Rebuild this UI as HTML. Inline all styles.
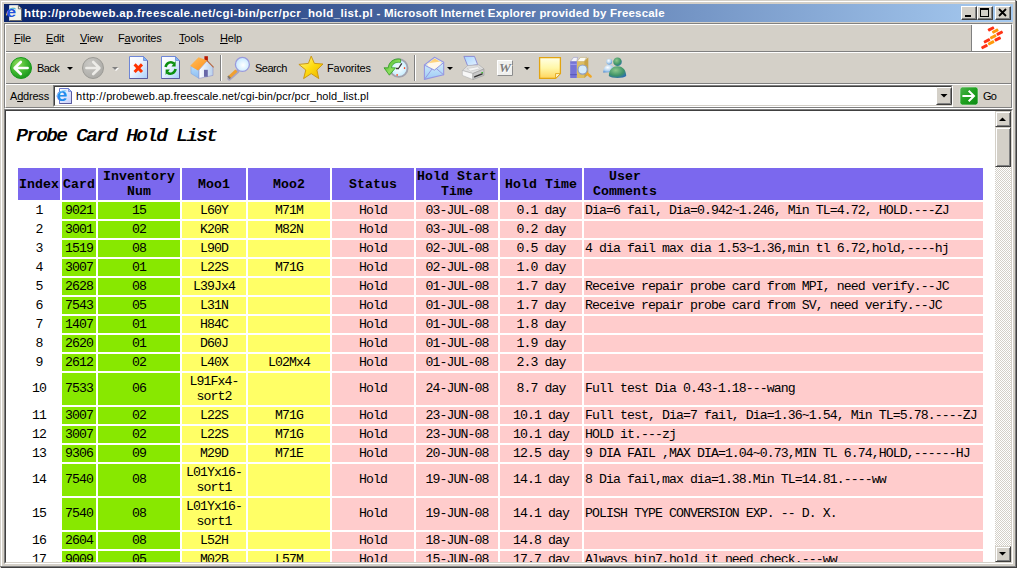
<!DOCTYPE html>
<html lang="en">
<head>
<meta charset="utf-8">
<title>Probe Card Hold List</title>
<style>
html,body{margin:0;padding:0;}
body{width:1017px;height:568px;overflow:hidden;background:#D4D0C8;position:relative;font-family:"Liberation Sans",sans-serif;font-size:11px;color:#000;}
.abs{position:absolute;}
#win{position:absolute;left:0;top:0;width:1017px;height:568px;background:#D4D0C8;overflow:hidden;}
/* outer frame */
#f1{left:0;top:0;width:1015px;height:566px;border-right:1px solid #808080;border-bottom:1px solid #808080;box-shadow:1px 1px 0 0 #404040;}
#f2{left:1px;top:1px;width:1014px;height:565px;border-left:1px solid #fff;border-top:1px solid #fff;box-sizing:border-box;}
/* title bar */
#title{left:4px;top:4px;width:1009px;height:18px;background:linear-gradient(to right,#0A246A 0%,#A6CAF0 100%);}
#title .txt{position:absolute;left:20px;top:0;height:18px;line-height:18px;color:#fff;font-weight:bold;font-size:11.5px;letter-spacing:0.29px;white-space:nowrap;}
.tbtn{position:absolute;top:2px;width:16px;height:14px;background:#D4D0C8;box-sizing:border-box;border:1px solid;border-color:#fff #404040 #404040 #fff;box-shadow:inset -1px -1px 0 #808080;}
/* rebar */
#rebar{left:4px;top:23px;width:1009px;height:86px;box-sizing:border-box;border:1px solid;border-color:#808080 #fff #fff #808080;}
#rebar2{left:5px;top:24px;width:1007px;height:84px;box-sizing:border-box;border:1px solid;border-color:#fff #808080 #808080 #fff;}
.hsep{position:absolute;left:6px;width:1005px;height:1px;}
.menu{position:absolute;top:31px;height:14px;line-height:14px;font-size:11px;white-space:nowrap;letter-spacing:-0.2px;}
.menu u{text-decoration:underline;text-decoration-thickness:1px;text-underline-offset:1px;}
.tbtxt{position:absolute;top:61px;height:14px;line-height:14px;font-size:11px;white-space:nowrap;}
.vsep{position:absolute;top:55px;width:1px;height:26px;background:#808080;box-shadow:1px 0 0 #fff;}
.dd{position:absolute;width:0;height:0;border-left:3px solid transparent;border-right:3px solid transparent;border-top:3px solid #000;}
/* address */
#addr{left:53px;top:85px;width:900px;height:22px;box-sizing:border-box;background:#fff;border:1px solid;border-color:#808080 #fff #fff #808080;}
#addr .in{position:absolute;left:0;top:0;right:0;bottom:0;border:1px solid;border-color:#404040 #D4D0C8 #D4D0C8 #404040;}
/* content */
#cframe{left:4px;top:109px;width:1009px;height:455px;box-sizing:border-box;border:1px solid;border-color:#808080 #fff #fff #808080;}
#cframe2{left:5px;top:110px;width:1007px;height:453px;box-sizing:border-box;border:1px solid;border-color:#404040 #D4D0C8 #D4D0C8 #404040;}
#page{left:6px;top:111px;width:989px;height:451px;background:#fff;overflow:hidden;}
#sb{left:995px;top:111px;width:16px;height:451px;background:#EAE8E4;background-image:repeating-conic-gradient(#fff 0% 25%,#D4D0C8 0% 50%);background-size:2px 2px;}
.sbtn{position:absolute;left:0;width:16px;box-sizing:border-box;background:#D4D0C8;border:1px solid;border-color:#D4D0C8 #404040 #404040 #D4D0C8;box-shadow:inset 1px 1px 0 #fff,inset -1px -1px 0 #808080;}
/* page content */
#page h2{position:absolute;left:10px;top:13px;margin:0;font-family:"Liberation Mono",monospace;font-style:italic;font-weight:normal;text-shadow:0.8px 0 0 #000;font-size:19px;line-height:24px;letter-spacing:-1.4px;white-space:nowrap;}
table{position:absolute;left:10px;top:55px;width:969px;border-collapse:separate;border-spacing:2px;table-layout:fixed;font-family:"Liberation Mono",monospace;font-size:13.2px;line-height:15px;letter-spacing:-0.92px;}
th,td{padding:1px;text-align:center;vertical-align:middle;white-space:nowrap;overflow:visible;}
th{background:#7B68EE;font-weight:bold;letter-spacing:0.08px;}
tr.tall td{padding:0 1px 2px 1px;}
tr.tall td.y{padding:1px;}
td.i{background:#fff;}
td.g{background:#88E800;}
td.y{background:#FFFF66;}
td.p,td.c{background:#FFCCCC;}
td.c{text-align:left;}
</style>
</head>
<body>
<div id="win">
<div id="f1" class="abs"></div>
<div id="f2" class="abs"></div>

<div id="title" class="abs">
  <div class="txt"><span style="letter-spacing:0.37px">http://probeweb.ap.freescale.net/cgi-bin/pcr/pcr_hold_list.pl</span><span style="letter-spacing:0.19px"> - Microsoft Internet Explorer provided by Freescale</span></div>
  <div class="tbtn" style="left:957px"></div>
  <div class="tbtn" style="left:973px"></div>
  <div class="tbtn" style="left:991px"></div>
</div>

<div id="rebar" class="abs"></div>
<div id="rebar2" class="abs"></div>
<div class="hsep" style="top:51px;background:#808080"></div>
<div class="hsep" style="top:52px;background:#fff"></div>
<div class="hsep" style="top:83px;background:#808080"></div>
<div class="hsep" style="top:84px;background:#fff"></div>

<div class="menu" style="left:14px"><u>F</u>ile</div>
<div class="menu" style="left:46px"><u>E</u>dit</div>
<div class="menu" style="left:80px"><u>V</u>iew</div>
<div class="menu" style="left:118px">F<u>a</u>vorites</div>
<div class="menu" style="left:179px"><u>T</u>ools</div>
<div class="menu" style="left:220px"><u>H</u>elp</div>

<div class="abs" style="left:971px;top:25px;width:1px;height:27px;background:#808080"></div>
<div class="abs" id="logo" style="left:972px;top:24px;width:39px;height:27px;background:#fff"></div>
<div class="abs" style="left:973px;top:51px;width:39px;height:1px;background:#808080"></div>

<div class="tbtxt" style="left:37px;letter-spacing:-0.6px">Back</div>
<div class="tbtxt" style="left:255px;letter-spacing:-0.5px">Search</div>
<div class="tbtxt" style="left:327px;letter-spacing:-0.15px">Favorites</div>
<div class="dd" style="left:67px;top:67px"></div>
<div class="dd" style="left:113px;top:68px;border-top-color:#fff"></div><div class="dd" style="left:112px;top:67px;border-top-color:#808080"></div>
<div class="dd" style="left:447px;top:67px"></div>
<div class="dd" style="left:524px;top:67px"></div>
<div class="vsep" style="left:220px"></div>
<div class="vsep" style="left:414px"></div>

<div class="menu" style="left:10px;top:89px">A<u>d</u>dress</div>
<div id="addr" class="abs"><div class="in"></div>
  <div class="abs" style="left:22px;top:3px;height:14px;line-height:14px;font-size:11px;letter-spacing:0.05px;white-space:nowrap"><span style="letter-spacing:0.38px">http://</span>probeweb.ap.freescale.net/cgi-bin/pcr/pcr_hold_list.pl</div>
</div>
<div class="tbtxt" style="left:983px;top:89px;letter-spacing:-0.8px">Go</div>

<svg id="icons" class="abs" style="left:0;top:0" width="1017" height="110" viewBox="0 0 1017 110">
<defs>
<radialGradient id="gBack" cx="0.35" cy="0.3" r="0.8"><stop offset="0" stop-color="#8EDB5A"/><stop offset="0.55" stop-color="#3DB52E"/><stop offset="1" stop-color="#13901A"/></radialGradient>
<radialGradient id="gFwd" cx="0.35" cy="0.3" r="0.8"><stop offset="0" stop-color="#C9C8C4"/><stop offset="1" stop-color="#A9A8A4"/></radialGradient>
<linearGradient id="gPage" x1="0" y1="0" x2="1" y2="1"><stop offset="0" stop-color="#FFFFFF"/><stop offset="0.4" stop-color="#F2F7FF"/><stop offset="1" stop-color="#A9CFFA"/></linearGradient>
<linearGradient id="gRoof" x1="0" y1="0" x2="1" y2="1"><stop offset="0" stop-color="#FFC060"/><stop offset="1" stop-color="#FF9018"/></linearGradient>
<linearGradient id="gWall" x1="0" y1="0" x2="1" y2="0"><stop offset="0" stop-color="#FFFFFF"/><stop offset="1" stop-color="#B8D0EC"/></linearGradient>
<linearGradient id="gSide" x1="0" y1="0" x2="0" y2="1"><stop offset="0" stop-color="#B4DCFC"/><stop offset="1" stop-color="#8CBCF0"/></linearGradient>
<radialGradient id="gLens" cx="0.55" cy="0.55" r="0.6"><stop offset="0" stop-color="#FFFFFF"/><stop offset="1" stop-color="#BFE6FF"/></radialGradient>
<linearGradient id="gStar" x1="0" y1="0" x2="1" y2="1"><stop offset="0" stop-color="#FFF7A0"/><stop offset="0.5" stop-color="#FFDC10"/><stop offset="1" stop-color="#E8B000"/></linearGradient>
<linearGradient id="gEnv" x1="0" y1="0" x2="0" y2="1"><stop offset="0" stop-color="#E6F9FF"/><stop offset="1" stop-color="#9CCAF4"/></linearGradient>
<linearGradient id="gFlap" x1="0" y1="0" x2="0" y2="1"><stop offset="0" stop-color="#FFC860"/><stop offset="1" stop-color="#FFF0C8"/></linearGradient>
<linearGradient id="gNote" x1="0" y1="0" x2="0" y2="1"><stop offset="0" stop-color="#FFFFE6"/><stop offset="0.5" stop-color="#FFF7A8"/><stop offset="1" stop-color="#FFD45C"/></linearGradient>
<linearGradient id="gPaper" x1="0" y1="0" x2="1" y2="1"><stop offset="0" stop-color="#A8D4FF"/><stop offset="1" stop-color="#E6F3FF"/></linearGradient>
<radialGradient id="gClock" cx="0.5" cy="0.5" r="0.5"><stop offset="0" stop-color="#FFFFFF"/><stop offset="1" stop-color="#C4ECFF"/></radialGradient>
<linearGradient id="gGo" x1="0" y1="0" x2="1" y2="1"><stop offset="0" stop-color="#4DB24D"/><stop offset="0.5" stop-color="#1FA01F"/><stop offset="1" stop-color="#0C8A14"/></linearGradient>
<radialGradient id="gMsn" cx="0.4" cy="0.35" r="0.75"><stop offset="0" stop-color="#8CC88C"/><stop offset="0.6" stop-color="#3F9468"/><stop offset="1" stop-color="#2868B8"/></radialGradient>
<radialGradient id="gMsn2" cx="0.4" cy="0.35" r="0.75"><stop offset="0" stop-color="#FFFFFF"/><stop offset="0.6" stop-color="#A8CCEC"/><stop offset="1" stop-color="#3078D0"/></radialGradient>
<linearGradient id="gHist" x1="0" y1="0" x2="1" y2="1"><stop offset="0" stop-color="#2FA81C"/><stop offset="0.55" stop-color="#8FE060"/><stop offset="1" stop-color="#2FA81C"/></linearGradient>
<linearGradient id="gAddrPg" x1="0" y1="0" x2="1" y2="1"><stop offset="0" stop-color="#FFFFFF"/><stop offset="1" stop-color="#C4CCFA"/></linearGradient>
</defs>

<!-- title icon: page + e -->
<g>
<path d="M9.5 5.5 H18.5 L21.5 8.5 V20.5 H9.5 Z" fill="#F3F3EA" stroke="#FFFFFF" stroke-width="0.6"/>
<path d="M21.6 8.6 V20.6 H9.6" fill="none" stroke="#5E5E5E" stroke-width="1"/>
<path d="M18.4 5.4 V8.8 H21.6 Z" fill="#fff" stroke="#4A4A4A" stroke-width="0.8"/>
<path d="M6.4 15.4 C7.4 10 11.4 7.6 15 8.4" fill="none" stroke="#E8C040" stroke-width="1.1"/>
<text x="6.6" y="17.2" font-family="Liberation Sans, sans-serif" font-weight="bold" font-size="15.2" fill="#2350DA" textLength="9.6" lengthAdjust="spacingAndGlyphs">e</text>
<path d="M9 9.6 C11 8 13.6 7.8 15.8 9" fill="none" stroke="#3CB4F4" stroke-width="1"/>
</g>

<!-- title buttons glyphs -->
<rect x="965" y="15" width="6" height="2" fill="#000"/>
<rect x="980.5" y="8.5" width="8" height="8" fill="none" stroke="#000" stroke-width="1"/><rect x="980" y="8" width="9" height="2" fill="#000"/>
<path d="M999 9 L1006 16 M1006 9 L999 16" stroke="#000" stroke-width="1.8" fill="none"/>

<!-- freescale logo -->
<g>
<g fill="#FF3314">
<rect x="-3.3" y="-1.5" width="6.6" height="3" rx="0.7" transform="translate(991 28.9) rotate(-27)"/>
<rect x="-3.3" y="-1.5" width="6.6" height="3" rx="0.7" transform="translate(999.7 33.2) rotate(-27)"/>
<rect x="-3.3" y="-1.5" width="6.6" height="3" rx="0.7" transform="translate(997.7 39) rotate(-27)"/>
<rect x="-3.3" y="-1.5" width="6.6" height="3" rx="0.7" transform="translate(986.9 40.8) rotate(-27)"/>
<rect x="-3.3" y="-1.5" width="6.6" height="3" rx="0.7" transform="translate(984.5 46.6) rotate(-27)"/>
</g>
<g fill="#FF9A0A">
<rect x="-3.3" y="-1.5" width="6.6" height="3" rx="0.7" transform="translate(995.3 31.1) rotate(-27)"/>
<rect x="-3.3" y="-1.5" width="6.6" height="3" rx="0.7" transform="translate(993.2 36.8) rotate(-27)"/>
<rect x="-3.3" y="-1.5" width="6.6" height="3" rx="0.7" transform="translate(991.1 42.8) rotate(-27)"/>
</g>
</g>

<!-- Back -->
<circle cx="21" cy="68" r="10.5" fill="url(#gBack)" stroke="#18991C" stroke-width="1"/>
<path d="M27.6 68 H15 M20.8 62 L14.6 68 L20.8 74" fill="none" stroke="#fff" stroke-width="2.6" stroke-linecap="round" stroke-linejoin="round"/>
<!-- Forward -->
<circle cx="93" cy="68" r="10.5" fill="url(#gFwd)" stroke="#9C9B96" stroke-width="1"/>
<path d="M86.4 68 H99 M93.2 62 L99.4 68 L93.2 74" fill="none" stroke="#EDECE8" stroke-width="2.6" stroke-linecap="round" stroke-linejoin="round"/>

<!-- Stop -->
<g>
<path d="M129.5 56.5 H143.5 L147.5 60.5 V78.5 H129.5 Z" fill="url(#gPage)" stroke="#6E86D6" stroke-width="1"/>
<path d="M147.5 60.5 V78.5 H129.5" fill="none" stroke="#5B5B9E" stroke-width="1"/>
<path d="M143.5 56.5 V60.5 H147.5 Z" fill="#7DB8F5" stroke="#6E86D6" stroke-width="0.8"/>
<path d="M134.6 64.4 L142 72 M142 64.4 L134.6 72" stroke="#FF3300" stroke-width="3" fill="none"/>
</g>
<!-- Refresh -->
<g>
<path d="M161.5 56.5 H175.5 L179.5 60.5 V78.5 H161.5 Z" fill="url(#gPage)" stroke="#6E86D6" stroke-width="1"/>
<path d="M179.5 60.5 V78.5 H161.5" fill="none" stroke="#5B5B9E" stroke-width="1"/>
<path d="M175.5 56.5 V60.5 H179.5 Z" fill="#7DB8F5" stroke="#6E86D6" stroke-width="0.8"/>
<path d="M165.6 67 C166.5 62.5 171 61 174 63.5" fill="none" stroke="#0C9010" stroke-width="2.6"/>
<path d="M171.5 66.6 H175.6 V61 Z" fill="#0C9010"/>
<path d="M175.6 69 C174.7 73.5 170.2 75 167.2 72.5" fill="none" stroke="#0C9010" stroke-width="2.6"/>
<path d="M169.8 69.4 H165.6 V75 Z" fill="#0C9010"/>
</g>
<!-- Home -->
<g>
<rect x="204.4" y="56.2" width="3.5" height="5" fill="#B81800"/>
<path d="M191 66.3 L199 70 V78.4 L191 73.4 Z" fill="url(#gSide)" stroke="#86A8E0" stroke-width="0.6"/>
<path d="M199 70 L207 60.8 L213 67 V75.4 L199 78.4 Z" fill="url(#gWall)" stroke="#9090C8" stroke-width="0.6"/>
<path d="M190.2 65.8 L198.6 57.3 L207.2 60.6 L198 70.4 Z" fill="url(#gRoof)"/>
<path d="M207 60.6 L213.6 67.4" stroke="#B86A40" stroke-width="1.2" fill="none"/>
<rect x="204" y="69.8" width="3.8" height="7" fill="#6868A8"/>
</g>
<!-- Search magnifier -->
<g>
<path d="M236.4 71 L228.6 78" stroke="#8C88C0" stroke-width="4" stroke-linecap="round" opacity="0.6" transform="translate(0.8 0.6)"/>
<path d="M236.4 70.6 L228.8 77.6" stroke="#F0A030" stroke-width="3.2" stroke-linecap="butt"/>
<path d="M229.8 76.6 L228.4 78" stroke="#807868" stroke-width="3.2"/>
<circle cx="242.4" cy="64.4" r="7" fill="url(#gLens)" stroke="#9A9ADC" stroke-width="1.3"/>
</g>
<!-- Star -->
<path d="M311.2 56.1 L314.4 63.4 L323 64 L316.9 70 L318.8 78.6 L311.2 73.6 L303.6 78.6 L305.8 70 L298.9 64.4 L308.4 63.4 Z" fill="url(#gStar)" stroke="#C8920A" stroke-width="0.9" stroke-linejoin="round"/>
<!-- History -->
<g>
<circle cx="398.8" cy="68.1" r="8.8" fill="url(#gClock)" stroke="#A2A2AE" stroke-width="1.9"/>
<path d="M398.8 68 L401.8 63.4 M399 68.5 H396" stroke="#3A3A3A" stroke-width="1.3" fill="none"/>
<rect x="403.9" y="67.2" width="1.3" height="1.8" fill="#FF4A20"/><rect x="396.4" y="74.2" width="1.5" height="1.5" fill="#FF4A20"/>
<path d="M400.6 59.2 C393.6 57.8 388.6 62.4 388.2 67.8 H384 L389.4 75.2 L395.6 67.8 H391.6 C391.8 64.4 395 61.6 400.6 62.4 Z" fill="url(#gHist)" stroke="#1E9414" stroke-width="0.7"/>
</g>
<!-- Mail -->
<g>
<path d="M424.4 65 L434.6 57.2 L443.7 62.2 V74.8 L424.4 79.4 Z" fill="url(#gEnv)" stroke="#9696E0" stroke-width="1.1" stroke-linejoin="round"/>
<path d="M426.6 64.6 L434.6 58.6 L441.8 62.4 L434.4 68.6 Z" fill="url(#gFlap)"/>
<path d="M427.4 63.6 L440.6 61.6 L441 65 L434.4 69.4 L428 66.6 Z" fill="#FFF8EA"/>
<path d="M424.6 65.2 L434.4 70.2 L443.6 62.6 M424.6 79.2 L432 69 M443.6 74.8 L436.4 68.6" fill="none" stroke="#9696E0" stroke-width="1"/>
</g>
<!-- Printer -->
<g>
<path d="M463.9 56.4 H474.5 L477.6 64.6 L467.8 66.2 Z" fill="url(#gPaper)" stroke="#8484D4" stroke-width="0.9"/>
<path d="M462.3 70.5 L467.6 65.6 L478.8 64.8 L484 68.9 L472.9 73.5 Z" fill="#E0E0E0" stroke="#A8A8A8" stroke-width="0.6"/>
<path d="M467 68.6 L477.6 66.8 L480.4 68.6 L470.6 71 Z" fill="#F6F6F6" stroke="#BDBDBD" stroke-width="0.5"/>
<path d="M462.3 70.5 L472.9 73.5 V79.6 L462.3 75.4 Z" fill="#F7F7F7" stroke="#B0B0B0" stroke-width="0.6"/>
<path d="M472.9 73.5 L484 68.9 V75.4 L472.9 79.6 Z" fill="#C8C8C8" stroke="#9A9A9A" stroke-width="0.6"/>
<path d="M474.2 76.2 L482.6 73 V74.6 L474.2 77.8 Z" fill="#303030"/>
<rect x="481.4" y="72" width="1.6" height="1.2" fill="#40C030"/>
</g>
<!-- Word W -->
<g>
<rect x="497" y="60" width="16" height="16" fill="#F0F0EE"/>
<path d="M497.5 75.5 V60.5 H512.5" fill="none" stroke="#FFFFFF" stroke-width="1"/>
<path d="M497.5 75.5 H512.5 V60.5" fill="none" stroke="#8C8C8C" stroke-width="1"/>
<text x="499.8" y="72.6" font-family="Liberation Serif, serif" font-weight="bold" font-style="italic" font-size="12.5" textLength="12" lengthAdjust="spacingAndGlyphs" fill="#fff">W</text><text x="499" y="72" font-family="Liberation Serif, serif" font-weight="bold" font-style="italic" font-size="12.5" textLength="12" lengthAdjust="spacingAndGlyphs" fill="#7E7E7E">W</text>
</g>
<!-- Note -->
<g>
<path d="M539.6 57.6 H560.4 V73.6 L555.6 78.4 H539.6 Z" fill="url(#gNote)" stroke="#E2A412" stroke-width="1.3"/>
<path d="M560.4 73.6 H555.6 V78.4 Z" fill="#FFF6D0" stroke="#E2A412" stroke-width="0.9"/>
</g>
<!-- Research -->
<g>
<path d="M570.4 61.6 L573.6 57.4 L577.6 57.4 L576.8 61.6 Z" fill="#F4F4FA" stroke="#8C8CC8" stroke-width="0.5"/>
<rect x="570.2" y="61.4" width="6.6" height="16.6" fill="#7674D6"/>
<rect x="570.2" y="63.8" width="6.6" height="1.2" fill="#9C9AEC"/><rect x="570.2" y="74" width="6.6" height="1.2" fill="#5C5ABC"/>
<path d="M577 61.6 L580.4 57.4 L586.6 57.4 L584.2 61.6 Z" fill="#FBFBF4" stroke="#B8A060" stroke-width="0.5"/>
<path d="M577 61.4 H584.4 L588.2 57.6 V74.6 L584.4 78 H577 Z" fill="#DDBE62"/>
<path d="M584.4 61.4 L588.2 57.6 V74.6 L584.4 78 Z" fill="#C8A448"/>
<path d="M590.6 76.4 L585.6 72.2" stroke="#EFA828" stroke-width="2.6" stroke-linecap="round"/>
<circle cx="582.6" cy="69.6" r="4.6" fill="#D6ECFA" stroke="#8C9CC4" stroke-width="1.2"/>
</g>
<!-- Messenger -->
<g>
<path d="M603.2 72.6 C603.4 67.2 605.8 64.8 609 64.8 C612.2 64.8 614.2 67.2 614.4 72 Z" fill="url(#gMsn2)"/>
<circle cx="609.2" cy="61.6" r="2.9" fill="url(#gMsn2)"/>
<path d="M608.8 76 C609 69.5 612.5 66.2 617.5 66.2 C622.5 66.2 626 69.5 626.2 76 C624 78.6 611 78.6 608.8 76 Z" fill="url(#gMsn)"/>
<circle cx="617.5" cy="61.8" r="4.3" fill="url(#gMsn)"/>
</g>

<!-- Address icon -->
<g>
<path d="M59.5 88.5 H68.5 L71.5 91.5 V103.5 H59.5 Z" fill="url(#gAddrPg)" stroke="#6C7CD0" stroke-width="1"/>
<path d="M71.5 91.5 V103.5 H59.5" fill="none" stroke="#5A5A9C" stroke-width="1"/>
<path d="M68.5 88.5 V91.5 H71.5 Z" fill="#9CC8FA" stroke="#6C7CD0" stroke-width="0.7"/>
<text x="56.2" y="100.8" font-family="Liberation Sans, sans-serif" font-weight="bold" font-size="17.6" fill="#258CEC" textLength="11" lengthAdjust="spacingAndGlyphs">e</text>
<path d="M56.6 96.6 C58 91.6 63 90 66.4 91" fill="none" stroke="#7CC8FA" stroke-width="1"/>
</g>
<!-- Address dropdown button -->
<g>
<rect x="936" y="87" width="16" height="18" fill="#D4D0C8"/>
<path d="M936.5 104.5 V87.5 H951.5" fill="none" stroke="#fff" stroke-width="1"/>
<path d="M936.5 104.5 H951.5 V87.5" fill="none" stroke="#404040" stroke-width="1"/>
<path d="M937.5 103.5 H950.5 V88.5" fill="none" stroke="#808080" stroke-width="1"/>
<path d="M940.5 94 H947.5 L944 97.6 Z" fill="#000"/>
</g>
<!-- Go -->
<g>
<rect x="960" y="87" width="18" height="18" rx="2.4" fill="url(#gGo)" stroke="#E8F2E8" stroke-width="0.6"/>
<path d="M963.4 96 H973.6 M969.4 91.4 L974 96 L969.4 100.6" fill="none" stroke="#fff" stroke-width="2" stroke-linecap="square" stroke-linejoin="miter"/>
</g>
</svg>

<div id="cframe" class="abs"></div>
<div id="cframe2" class="abs"></div>
<div id="page" class="abs">
<h2>Probe Card Hold List</h2>
<table>
<colgroup><col style="width:42px"><col style="width:34px"><col style="width:82px"><col style="width:64px"><col style="width:82px"><col style="width:82px"><col style="width:82px"><col style="width:82px"><col style="width:399px"></colgroup>
<tr><th>Index</th><th>Card</th><th>Inventory<br>Num</th><th>Moo1</th><th>Moo2</th><th>Status</th><th>Hold Start<br>Time</th><th>Hold Time</th><th style="text-align:left"><div style="display:inline-block;text-align:center;margin-left:8px">User<br>Comments</div></th></tr>
<tr><td class="i"><span>1</span></td><td class="g"><span>9021</span></td><td class="g"><span>15</span></td><td class="y"><span>L60Y</span></td><td class="y"><span>M71M</span></td><td class="p"><span>Hold</span></td><td class="p"><span>03-JUL-08</span></td><td class="p"><span>0.1 day</span></td><td class="c"><span>Dia=6 fail, Dia=0.942~1.246, Min TL=4.72, HOLD.---ZJ</span></td></tr>
<tr><td class="i"><span>2</span></td><td class="g"><span>3001</span></td><td class="g"><span>02</span></td><td class="y"><span>K20R</span></td><td class="y"><span>M82N</span></td><td class="p"><span>Hold</span></td><td class="p"><span>03-JUL-08</span></td><td class="p"><span>0.2 day</span></td><td class="c"></td></tr>
<tr><td class="i"><span>3</span></td><td class="g"><span>1519</span></td><td class="g"><span>08</span></td><td class="y"><span>L90D</span></td><td class="y"></td><td class="p"><span>Hold</span></td><td class="p"><span>02-JUL-08</span></td><td class="p"><span>0.5 day</span></td><td class="c"><span>4 dia fail max dia 1.53~1.36,min tl 6.72,hold,----hj</span></td></tr>
<tr><td class="i"><span>4</span></td><td class="g"><span>3007</span></td><td class="g"><span>01</span></td><td class="y"><span>L22S</span></td><td class="y"><span>M71G</span></td><td class="p"><span>Hold</span></td><td class="p"><span>02-JUL-08</span></td><td class="p"><span>1.0 day</span></td><td class="c"></td></tr>
<tr><td class="i"><span>5</span></td><td class="g"><span>2628</span></td><td class="g"><span>08</span></td><td class="y"><span>L39Jx4</span></td><td class="y"></td><td class="p"><span>Hold</span></td><td class="p"><span>01-JUL-08</span></td><td class="p"><span>1.7 day</span></td><td class="c"><span>Receive repair probe card from MPI, need verify.--JC</span></td></tr>
<tr><td class="i"><span>6</span></td><td class="g"><span>7543</span></td><td class="g"><span>05</span></td><td class="y"><span>L31N</span></td><td class="y"></td><td class="p"><span>Hold</span></td><td class="p"><span>01-JUL-08</span></td><td class="p"><span>1.7 day</span></td><td class="c"><span>Receive repair probe card from SV, need verify.--JC</span></td></tr>
<tr><td class="i"><span>7</span></td><td class="g"><span>1407</span></td><td class="g"><span>01</span></td><td class="y"><span>H84C</span></td><td class="y"></td><td class="p"><span>Hold</span></td><td class="p"><span>01-JUL-08</span></td><td class="p"><span>1.8 day</span></td><td class="c"></td></tr>
<tr><td class="i"><span>8</span></td><td class="g"><span>2620</span></td><td class="g"><span>01</span></td><td class="y"><span>D60J</span></td><td class="y"></td><td class="p"><span>Hold</span></td><td class="p"><span>01-JUL-08</span></td><td class="p"><span>1.9 day</span></td><td class="c"></td></tr>
<tr><td class="i"><span>9</span></td><td class="g"><span>2612</span></td><td class="g"><span>02</span></td><td class="y"><span>L40X</span></td><td class="y"><span>L02Mx4</span></td><td class="p"><span>Hold</span></td><td class="p"><span>01-JUL-08</span></td><td class="p"><span>2.3 day</span></td><td class="c"></td></tr>
<tr class="tall"><td class="i"><span>10</span></td><td class="g"><span>7533</span></td><td class="g"><span>06</span></td><td class="y"><span>L91Fx4-<br>sort2</span></td><td class="y"></td><td class="p"><span>Hold</span></td><td class="p"><span>24-JUN-08</span></td><td class="p"><span>8.7 day</span></td><td class="c"><span>Full test Dia 0.43-1.18---wang</span></td></tr>
<tr><td class="i"><span>11</span></td><td class="g"><span>3007</span></td><td class="g"><span>02</span></td><td class="y"><span>L22S</span></td><td class="y"><span>M71G</span></td><td class="p"><span>Hold</span></td><td class="p"><span>23-JUN-08</span></td><td class="p"><span>10.1 day</span></td><td class="c"><span>Full test, Dia=7 fail, Dia=1.36~1.54, Min TL=5.78.----ZJ</span></td></tr>
<tr><td class="i"><span>12</span></td><td class="g"><span>3007</span></td><td class="g"><span>02</span></td><td class="y"><span>L22S</span></td><td class="y"><span>M71G</span></td><td class="p"><span>Hold</span></td><td class="p"><span>23-JUN-08</span></td><td class="p"><span>10.1 day</span></td><td class="c"><span>HOLD it.---zj</span></td></tr>
<tr><td class="i"><span>13</span></td><td class="g"><span>9306</span></td><td class="g"><span>09</span></td><td class="y"><span>M29D</span></td><td class="y"><span>M71E</span></td><td class="p"><span>Hold</span></td><td class="p"><span>20-JUN-08</span></td><td class="p"><span>12.5 day</span></td><td class="c"><span>9 DIA FAIL ,MAX DIA=1.04~0.73,MIN TL 6.74,HOLD,------HJ</span></td></tr>
<tr class="tall"><td class="i"><span>14</span></td><td class="g"><span>7540</span></td><td class="g"><span>08</span></td><td class="y"><span>L01Yx16-<br>sort1</span></td><td class="y"></td><td class="p"><span>Hold</span></td><td class="p"><span>19-JUN-08</span></td><td class="p"><span>14.1 day</span></td><td class="c"><span>8 Dia fail,max dia=1.38.Min TL=14.81.----ww</span></td></tr>
<tr class="tall"><td class="i"><span>15</span></td><td class="g"><span>7540</span></td><td class="g"><span>08</span></td><td class="y"><span>L01Yx16-<br>sort1</span></td><td class="y"></td><td class="p"><span>Hold</span></td><td class="p"><span>19-JUN-08</span></td><td class="p"><span>14.1 day</span></td><td class="c"><span>POLISH TYPE CONVERSION EXP. -- D. X.</span></td></tr>
<tr><td class="i"><span>16</span></td><td class="g"><span>2604</span></td><td class="g"><span>08</span></td><td class="y"><span>L52H</span></td><td class="y"></td><td class="p"><span>Hold</span></td><td class="p"><span>18-JUN-08</span></td><td class="p"><span>14.8 day</span></td><td class="c"></td></tr>
<tr><td class="i"><span>17</span></td><td class="g"><span>9009</span></td><td class="g"><span>05</span></td><td class="y"><span>M02B</span></td><td class="y"><span>L57M</span></td><td class="p"><span>Hold</span></td><td class="p"><span>15-JUN-08</span></td><td class="p"><span>17.7 day</span></td><td class="c"><span>Always bin7,hold it need check.---ww</span></td></tr>
</table>
</div>
<div id="sb" class="abs">
  <div class="sbtn" style="top:0;height:16px"><svg class="abs" style="left:3px;top:5px" width="8" height="5"><path d="M0 4 H7 L3.5 0.5 Z" fill="#000"/></svg></div>
  <div class="sbtn" style="top:16px;height:40px"></div>
  <div class="sbtn" style="top:435px;height:16px"><svg class="abs" style="left:3px;top:5px" width="8" height="5"><path d="M0 0 H7 L3.5 3.5 Z" fill="#000"/></svg></div>
</div>
</div>
</body>
</html>
